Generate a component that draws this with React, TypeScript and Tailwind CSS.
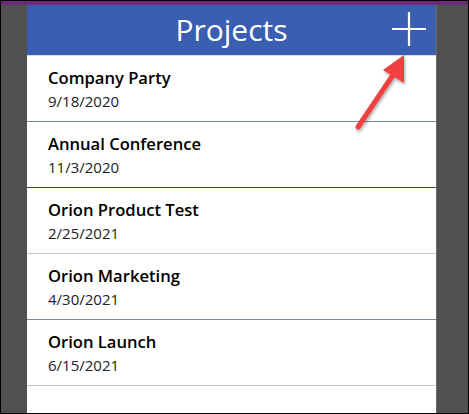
const projects = [
  { name: "Company Party", date: "9/18/2020", line: "border-[#7482bd]" },
  { name: "Annual Conference", date: "11/3/2020", line: "border-[#2f3f94]" },
  { name: "Orion Product Test", date: "2/25/2021", line: "border-[#c3c6df]" },
  { name: "Orion Marketing", date: "4/30/2021", line: "border-[#7d86b8]" },
  { name: "Orion Launch", date: "6/15/2021", line: "border-[#c3c6df]" },
];

export default function App() {
  return (
    <div
      className="relative w-[469px] h-[414px] overflow-hidden border border-black bg-[#505050] flex flex-col"
      style={{ fontFamily: '"Open Sans", "Noto Sans", sans-serif' }}
    >
      {/* top app bar strip */}
      <div className="h-[4px] bg-[#6c2a78] shrink-0" />

      <div className="flex flex-1">
        <div className="w-[26px] bg-[#505050]" />

        {/* screen */}
        <div className="w-[409px] bg-white flex flex-col">
          <div className="relative h-[51px] bg-[#3a5fb0] flex items-center justify-center border-b border-[#d8dcea]">
            <span className="text-white text-[30px] leading-none -mt-[1px]">Projects</span>
            <svg
              className="absolute right-[10px] top-[7px]"
              width="34"
              height="34"
              viewBox="0 0 34 34"
            >
              <path d="M17 0V34M0 17H34" stroke="white" strokeWidth="2.2" />
            </svg>
          </div>

          {projects.map((p) => (
            <div key={p.name} className={`h-[66px] border-b ${p.line} pl-[21px] pt-[9px]`}>
              <div className="text-[16.6px] font-semibold text-black leading-[25px]">{p.name}</div>
              <div className="text-[15px] text-[#222] leading-[22px]">{p.date}</div>
            </div>
          ))}
        </div>

        <div className="w-[1px] bg-[#6a6a6a]" />
        <div className="flex-1 bg-[#505050]" />
      </div>

      {/* red callout arrow */}
      <svg className="absolute left-0 top-0 pointer-events-none" width="469" height="414">
        <defs>
          <filter id="sh" x="-20%" y="-20%" width="140%" height="140%">
            <feDropShadow dx="1" dy="2" stdDeviation="1.5" floodColor="#000" floodOpacity="0.35" />
          </filter>
        </defs>
        <g filter="url(#sh)">
          <line x1="357" y1="126" x2="392" y2="74" stroke="#f0403f" strokeWidth="5" strokeLinecap="round" />
          <polygon points="403,54 403,82 382,69" fill="#f0403f" />
        </g>
      </svg>
    </div>
  );
}
